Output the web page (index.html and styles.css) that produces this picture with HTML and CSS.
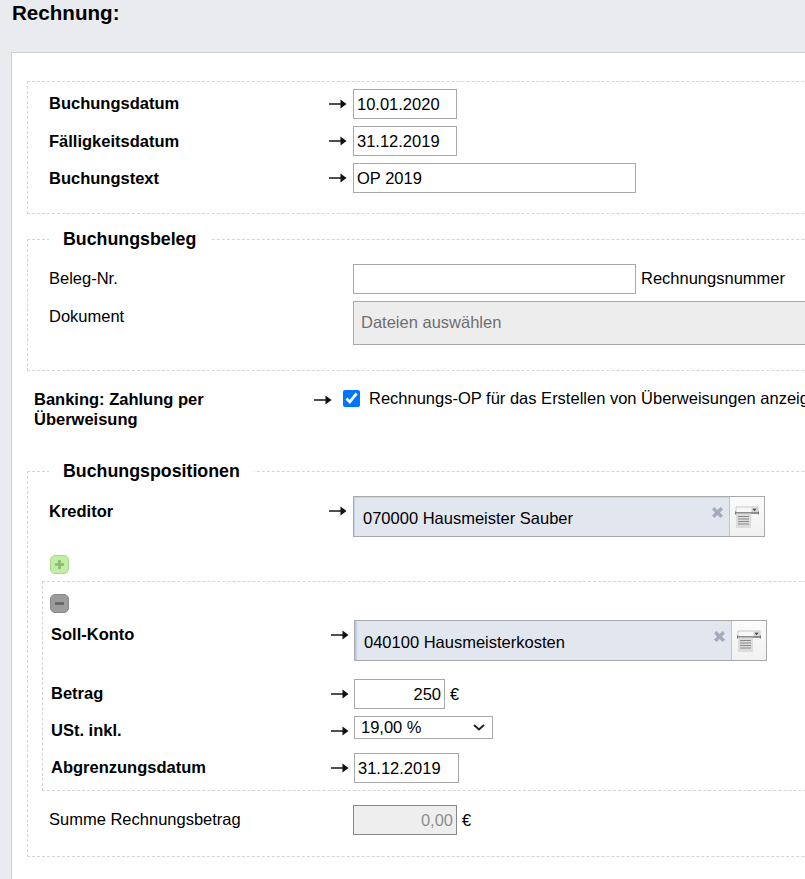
FILE: index.html
```html
<!DOCTYPE html>
<html lang="de">
<head>
<meta charset="utf-8">
<title>Rechnung</title>
<link rel="stylesheet" href="styles.css">
</head>
<body>
<svg class="defs" width="0" height="0" aria-hidden="true">
  <symbol id="arrow" viewBox="0 0 18 10"><path d="M0 4h12v2H0z" fill="#4f4f4f"/><path d="M11.500 0.500l6 4.500-6 4.500z" fill="#111"/></symbol>
  <symbol id="clear" viewBox="0 0 10 10"><path d="M2.200 0L5 2.800 7.800 0 10 2.200 7.200 5 10 7.800 7.800 10 5 7.200 2.200 10 0 7.800 2.800 5 0 2.200z" fill="#a3acbc"/></symbol>
  <symbol id="list" viewBox="0 0 24 22">
    <path d="M1 1h22v6H1z" fill="#f8f8f8" stroke="#bdbdbd" stroke-width=".8"/>
    <path d="M16.500 1.500h6.500v5h-6.500z" fill="#d5d5d5"/>
    <path d="M0 7h24" stroke="#5a5a5a" stroke-width="1.200"/>
    <path d="M17.500 2.800h4l-2 2.500z" fill="#444"/>
    <path d="M.5 5.500v3M23.500 5.500v3" stroke="#777"/>
    <path d="M1 7.500h15v14.500H1z" fill="#dcdcdc"/>
    <path d="M3 10.500h11M3 13h11M3 15.500h11M3 18h11" stroke="#8a8a8a"/>
  </symbol>
</svg>
<h1 class="title">Rechnung:</h1>
<main class="panel">
  <div class="box box-first">
    <div class="row">
      <span class="label strong">Buchungsdatum</span>
      <svg class="arrow"><use href="#arrow"/></svg>
      <input class="input w-date" type="text" value="10.01.2020">
    </div>
    <div class="row">
      <span class="label label-low strong">Fälligkeitsdatum</span>
      <svg class="arrow"><use href="#arrow"/></svg>
      <input class="input w-date" type="text" value="31.12.2019">
    </div>
    <div class="row">
      <span class="label label-low strong">Buchungstext</span>
      <svg class="arrow"><use href="#arrow"/></svg>
      <input class="input w-text" type="text" value="OP 2019">
    </div>
  </div>

  <fieldset class="group group-beleg">
    <legend class="legend">Buchungsbeleg</legend>
    <div class="row">
      <span class="label">Beleg-Nr.</span>
      <span></span>
      <div class="inline">
        <input class="input w-text" type="text">
        <span class="note">Rechnungsnummer</span>
      </div>
    </div>
    <div class="row">
      <span class="label label-low">Dokument</span>
      <span></span>
      <div class="filebox">Dateien auswählen</div>
    </div>
  </fieldset>

  <div class="row row-banking">
    <span class="label strong label-wrap">Banking: Zahlung per Überweisung</span>
    <svg class="arrow"><use href="#arrow"/></svg>
    <label class="check">
      <input class="checkbox" type="checkbox" checked>
      <span>Rechnungs-OP für das Erstellen von Überweisungen anzeigen</span>
    </label>
  </div>

  <fieldset class="group group-pos">
    <legend class="legend">Buchungspositionen</legend>
    <div class="row">
      <span class="label label-low strong">Kreditor</span>
      <svg class="arrow"><use href="#arrow"/></svg>
      <div class="combo">
        <div class="combo-value">070000 Hausmeister Sauber<svg class="combo-clear"><use href="#clear"/></svg></div>
        <div class="combo-btn"><svg class="list-icon"><use href="#list"/></svg></div>
      </div>
    </div>
    <button class="tool tool-add" type="button" aria-label="Hinzufügen">
      <svg viewBox="0 0 10 10" width="9" height="9"><path d="M3.500 0h3v3.500H10v3H6.500V10h-3V6.500H0v-3h3.500z" fill="#86b972"/></svg>
    </button>
    <div class="inner">
      <button class="tool tool-del" type="button" aria-label="Entfernen">
        <svg viewBox="0 0 10 10" width="9" height="9"><path d="M0 3.500h10v3H0z" fill="#666"/></svg>
      </button>
      <div class="row row-inner row-soll">
        <span class="label strong">Soll-Konto</span>
        <svg class="arrow"><use href="#arrow"/></svg>
        <div class="combo combo-wide">
          <div class="combo-value combo-accent">040100 Hausmeisterkosten<svg class="combo-clear"><use href="#clear"/></svg></div>
          <div class="combo-btn"><svg class="list-icon"><use href="#list"/></svg></div>
        </div>
      </div>
      <div class="row row-inner">
        <span class="label strong">Betrag</span>
        <svg class="arrow"><use href="#arrow"/></svg>
        <div class="inline">
          <input class="input w-amount right" type="text" value="250">
          <span>€</span>
        </div>
      </div>
      <div class="row row-inner">
        <span class="label strong">USt. inkl.</span>
        <svg class="arrow"><use href="#arrow"/></svg>
        <select class="select"><option>19,00 %</option></select>
      </div>
      <div class="row row-inner row-abgr">
        <span class="label strong">Abgrenzungsdatum</span>
        <svg class="arrow"><use href="#arrow"/></svg>
        <input class="input w-date2" type="text" value="31.12.2019">
      </div>
    </div>
    <div class="row row-sum">
      <span class="label">Summe Rechnungsbetrag</span>
      <span></span>
      <div class="inline">
        <input class="input w-date right disabled" type="text" value="0,00" disabled>
        <span>€</span>
      </div>
    </div>
  </fieldset>
</main>
</body>
</html>
```
FILE: styles.css
```css
html, body { margin: 0; padding: 0; height: 879px; overflow: hidden; }
body {
  background: #e9ebef;
  color: #000;
  font-family: "Liberation Sans", Arial, sans-serif;
  font-size: 16.5px;
  line-height: 20px;
  width: 1100px;
}
.defs { position: absolute; }
.title {
  margin: 0 0 27px 12px;
  font-size: 20.6px;
  line-height: 25px;
  font-weight: bold;
}
.panel {
  margin-left: 11px;
  padding: 28px 15px 40px;
  background: #fff;
  border: 1px solid #ced2da;
  height: 900px;
  box-sizing: border-box;
}
.box, .group, .inner { border: 1px dashed #d5d5d8; }
.box-first { padding: 7px 21px 20px; }
.group { margin: 0; padding: 0 21px; min-width: 0; }
.group-beleg { margin-top: 16px; padding-top: 16px; padding-bottom: 25px; }
.group-pos { margin-top: 32px; padding-top: 16px; padding-bottom: 21px; }
.legend { padding: 0 14px; font-weight: bold; font-size: 17.8px; line-height: 18px; }
.row {
  display: grid;
  grid-template-columns: 280px 24px 1fr;
  align-items: start;
  margin-bottom: 7px;
}
.group .row:last-child, .box .row:last-child, .inner .row:last-child { margin-bottom: 0; }
.label { padding-top: 4px; padding-bottom: 1px; }
.label-low { padding-top: 5px; padding-bottom: 0; }
.strong { font-weight: bold; }
.label-wrap { width: 210px; padding-top: 5px; line-height: 19.5px; }
.arrow { width: 18px; height: 10px; margin-top: 10px; }
.note { margin-top: -2px; }
.input {
  box-sizing: border-box;
  height: 30px;
  margin: 0;
  padding: 1px 3px;
  border: 1px solid #a9a9a9;
  background: #fff;
  color: #000;
  font: inherit;
  outline: none;
}
.w-date { width: 104px; }
.w-date2 { width: 105px; }
.w-text { width: 283px; }
.w-amount { width: 91px; }
.right { text-align: right; }
.disabled { background: #eee; border-color: #888; color: #8e8e8e; }
.inline { display: flex; align-items: center; gap: 5px; }
.filebox {
  box-sizing: border-box;
  height: 44px;
  padding: 0 7px 2px;
  display: flex;
  align-items: center;
  background: #ededed;
  border: 1px solid #a9a9a9;
  color: #6f6f6f;
}
.row-banking {
  grid-template-columns: 280px 29px 1fr;
  margin: 14px 0 0 7px;
}
.check { display: flex; align-items: flex-start; gap: 9px; padding-top: 3px; white-space: nowrap; }
.checkbox { width: 17px; height: 17px; margin: 2px 0 0; accent-color: #0075ff; }
.combo {
  display: flex;
  box-sizing: border-box;
  width: 412px;
  height: 41px;
  border: 1px solid #a9a9a9;
}
.combo-wide { width: 413px; }
.combo-value {
  position: relative;
  flex: 1;
  padding: 11px 0 0 9px;
  background: #e1e6ef;
  border-right: 1px solid #b9c6da;
  box-shadow: inset 1px 1px 0 #c6d1e2;
}
.combo-accent { box-shadow: inset 2px 0 0 #c0cde0; }
.combo-clear {
  position: absolute;
  top: 10px;
  right: 6px;
  width: 11px;
  height: 11px;
}
.combo-btn {
  width: 34px;
  background: linear-gradient(#fbfbfb, #f1f1f1);
  display: flex;
  justify-content: center;
  align-items: center;
}
.list-icon { width: 24px; height: 22px; }
.tool {
  display: flex;
  align-items: center;
  justify-content: center;
  box-sizing: border-box;
  width: 19px;
  height: 19px;
  padding: 0;
  border-radius: 5px;
}
.tool-add {
  margin: 18px 0 0 1px;
  background: #c0eea3;
  border: 1px solid #a7d98d;
}
.tool-del {
  margin: 12px 0 0 -1px;
  background: #9c9c9c;
  border: 1px solid #888;
}
.inner {
  margin: 7px 0 0 -7px;
  padding: 0 7px 7px 8px;
}
.row-inner { grid-template-columns: 280px 23px 1fr; }
.row-soll { margin-top: 7px; margin-bottom: 18px; }
.row-abgr { margin-top: 12px; }
.select {
  appearance: none;
  box-sizing: border-box;
  width: 139px;
  height: 23px;
  padding: 0 0 2px 6px;
  border: 1px solid #a9a9a9;
  border-radius: 0;
  background: #fff url("data:image/svg+xml,%3Csvg xmlns='http://www.w3.org/2000/svg' width='12' height='7'%3E%3Cpath d='M1 1l5 4.500L11 1' fill='none' stroke='%23222' stroke-width='2'/%3E%3C/svg%3E") no-repeat right 7px center;
  color: #000;
  font: inherit;
  line-height: 20px;
}
.row-sum { margin-top: 14px; }
```
